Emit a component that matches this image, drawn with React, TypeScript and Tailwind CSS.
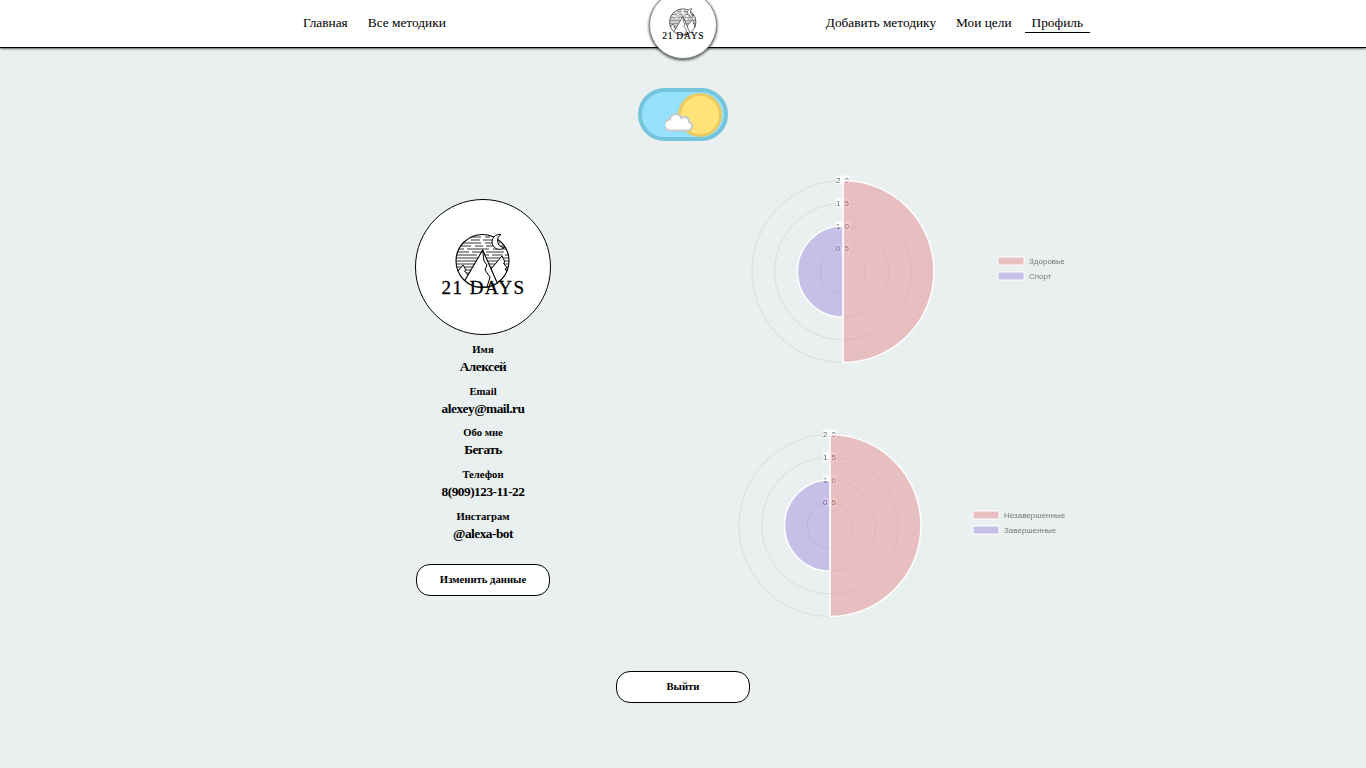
const serif = { fontFamily: '"Liberation Serif", serif' };

function Logo({ id, className }: { id: string; className: string }) {
  const dashes = [
    [38, "9 3 14 4 5 3"], [41, "12 4 9 3 16 3"], [44, "5 3 18 4 7 3"], [47, "16 4 8 3 20 3"],
    [50, "9 3 22 4 6 3"], [53, "14 3 10 4 18 3"], [56, "22 4 8 3 11 2"], [59, "60"], [62, "60"],
    [65, "60"], [68, "60"], [71, "60"], [74, "60"], [77, "60"], [80, "60"],
  ] as const;
  return (
    <svg viewBox="0 0 136 136" className={className}>
      <clipPath id={id}>
        <circle cx="67.5" cy="62" r="26.5" />
      </clipPath>
      <g clipPath={`url(#${id})`}>
        {dashes.map(([y, dash]) => (
          <line key={y} x1="40" x2="95" y1={y} y2={y} stroke="#000" strokeWidth="0.8" strokeDasharray={dash} />
        ))}
        <path d="M76 70 L87 57 L90 63 L88.5 64 L92 69 L90 70 L96 78 L96 90 L76 90 Z" fill="#fff" stroke="#000" strokeWidth="1" strokeLinejoin="round" />
        <path d="M38 78 L48 66 L51 71 L49.5 72 L54 77 L52 78 L57 85 L50 90 L38 90 Z" fill="#fff" stroke="#000" strokeWidth="1" strokeLinejoin="round" />
        <path d="M46 88 L67.7 51 L84 88 Z" fill="#fff" stroke="#000" strokeWidth="1.1" strokeLinejoin="round" />
        <path d="M67.7 51 L69 62 L72 66 L70 71 L75 78 L72 88" fill="none" stroke="#000" strokeWidth="1" strokeLinejoin="round" />
      </g>
      <circle cx="67.5" cy="62" r="26.5" fill="none" stroke="#000" strokeWidth="1.1" />
      <path d="M86 35.5a7.5 7.5 0 1 0 3.5 13 7 7 0 0 1-3.5-13z" fill="#fff" stroke="#000" strokeWidth="1" />
      <text
        x="68.5"
        y="95"
        textAnchor="middle"
        fontSize="19"
        letterSpacing="1.5"
        fill="#000"
        stroke="#000"
        strokeWidth="0.3"
        style={{ fontFamily: '"Liberation Serif", serif' }}
      >
        21 DAYS
      </text>
    </svg>
  );
}

function PolarChart({ cx, legendX, labels }: { cx: number; legendX: number; labels: [string, string] }) {
  const cy = 100.5;
  const r = 91;
  const ticks = [
    ["2.0", r],
    ["1.5", r * 0.75],
    ["1.0", r * 0.5],
    ["0.5", r * 0.25],
  ] as const;
  const inner = r * 0.5;
  return (
    <svg width="460" height="200" className="block will-change-transform">
      {ticks.map(([label, radius]) => (
        <circle key={label} cx={cx} cy={cy} r={radius} fill="none" stroke="rgba(0,0,0,0.08)" strokeWidth="1" />
      ))}
      {ticks.map(([label, radius]) => (
        <g key={label}>
          <rect x={cx - 7} y={cy - radius - 5} width="14" height="9" fill="rgba(255,255,255,0.85)" />
          <text
            x={cx}
            y={cy - radius + 2.5}
            textAnchor="middle"
            fontSize="8"
            letterSpacing="1"
            fill="#666"
            style={{ fontFamily: '"Liberation Sans", sans-serif' }}
          >
            {label}
          </text>
        </g>
      ))}
      <path
        d={`M${cx} ${cy - r} A${r} ${r} 0 0 1 ${cx} ${cy + r} Z`}
        fill="rgba(229,118,120,0.4)"
        stroke="#fff"
        strokeWidth="1.5"
      />
      <path
        d={`M${cx} ${cy + inner} A${inner} ${inner} 0 0 1 ${cx} ${cy - inner} Z`}
        fill="rgba(125,91,209,0.33)"
        stroke="#fff"
        strokeWidth="1.5"
      />
      {labels.map((label, i) => (
        <g key={label}>
          <rect
            x={legendX}
            y={86 + i * 15}
            width="26"
            height="8"
            fill={i === 0 ? "#e7bfc0" : "#c6bfe6"}
            stroke="#fff"
            strokeWidth="1"
          />
          <text
            x={legendX + 31}
            y={93 + i * 15}
            fontSize="8"
            fill="#777"
            style={{ fontFamily: '"Liberation Sans", sans-serif' }}
          >
            {label}
          </text>
        </g>
      ))}
    </svg>
  );
}

function Field({ label, value }: { label: string; value: string }) {
  return (
    <div className="flex h-[41.7px] flex-col items-center">
      <span className="text-[10.67px] leading-[17px] font-bold text-black">{label}</span>
      <span className="text-[13.33px] leading-[18px] font-bold tracking-[-0.5px] text-black">{value}</span>
    </div>
  );
}

function OutlineButton({ children, className }: { children: string; className?: string }) {
  return (
    <button className={`flex h-[32px] w-[134px] items-center justify-center rounded-[14px] border border-black bg-white pb-[2px] text-[10.67px] font-bold text-black ${className ?? ""}`}>
      {children}
    </button>
  );
}

export default function App() {
  return (
    <div className="min-h-[768px] bg-[#eaf0f0]" style={serif}>
      <header className="flex h-[48px] border-b border-black bg-white pl-[303px] shadow-[0_1px_2px_rgba(0,0,0,0.6)]">
        <nav className="flex h-[46px] w-[346px] items-center gap-5 text-[13.33px] text-black">
          <a>Главная</a>
          <a>Все методики</a>
        </nav>
        <div className="z-10 -mt-[9px] h-[68px] w-[68px] rounded-full border border-[#888] bg-white shadow-[0_1px_3px_rgba(0,0,0,0.8)]">
          <Logo id="logo-small" className="-m-px h-[68px] w-[68px]" />
        </div>
        <nav className="flex h-[46px] w-[373px] items-center justify-end text-[13.33px] text-black">
          <a>Добавить методику</a>
          <a className="ml-5">Мои цели</a>
          <a className="ml-[13px] border-b border-black px-[7px] leading-[19px]">Профиль</a>
        </nav>
      </header>

      <div className="mt-[40px] flex justify-center">
        <div className="relative flex h-[53px] w-[90px] items-center justify-end rounded-full border-4 border-[#74c5dc] bg-[#96e2fd] pr-[2px]">
          <div className="h-[44px] w-[44px] rounded-full border-[3px] border-[#e8ca60] bg-[#ffe278]" />
          <svg viewBox="0 0 28 20" className="absolute top-[20px] left-[23px] h-[20px] w-[28px]">
            <path
              d="M5 18.5H23A4.5 4.5 0 0 0 24 9.7A4.5 4.5 0 0 0 16.5 6A6 6 0 0 0 5 7.5A5.5 5.5 0 0 0 5 18.5Z"
              fill="#fff"
              stroke="#c9c9c9"
              strokeWidth="2"
            />
          </svg>
        </div>
      </div>

      <main className="mt-[30px] flex pl-[341px]">
        <section className="flex w-[284px] flex-col items-center pt-[28px]">
          <div className="mb-[6px] h-[136px] w-[136px] rounded-full border border-black bg-white">
            <Logo id="logo-large" className="-m-px h-[136px] w-[136px]" />
          </div>
          <Field label="Имя" value="Алексей" />
          <Field label="Email" value="alexey@mail.ru" />
          <Field label="Обо мне" value="Бегать" />
          <Field label="Телефон" value="8(909)123-11-22" />
          <Field label="Инстаграм" value="@alexa-bot" />
          <OutlineButton className="mt-[14.5px]">Изменить данные</OutlineButton>
        </section>
        <section className="flex flex-col gap-[54px]">
          <PolarChart cx={218} legendX={373} labels={["Здоровье", "Спорт"]} />
          <PolarChart cx={205} legendX={348} labels={["Незавершенные", "Завершенные"]} />
        </section>
      </main>

      <div className="mt-[46px] flex justify-center">
        <OutlineButton>Выйти</OutlineButton>
      </div>
    </div>
  );
}
